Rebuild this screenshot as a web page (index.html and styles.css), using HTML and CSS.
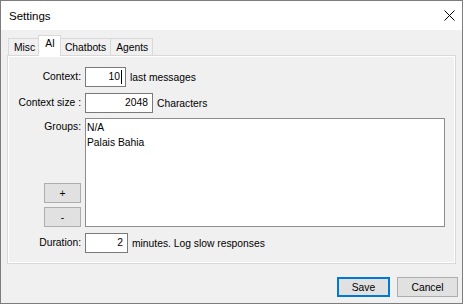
FILE: index.html
```html
<!DOCTYPE html>
<html lang="en">
  <head>
    <meta charset="UTF-8" />
    <meta name="viewport" content="width=device-width, initial-scale=1.0" />
    <title>Settings</title>
    <link rel="stylesheet" href="styles.css">
  </head>
  <body>
    <div class="window">
      <div class="titlebar">
        <span class="title">Settings</span>
        <svg class="close" width="11" height="11" viewBox="0 0 11 11">
          <path d="M0.5 0.5 L10.5 10.5 M10.5 0.5 L0.5 10.5" stroke="#000" stroke-width="1" fill="none" />
        </svg>
      </div>

      <div class="content">
        <div class="tabs">
          <div class="tab">Misc</div>
          <div class="tab active">AI</div>
          <div class="tab">Chatbots</div>
          <div class="tab">Agents</div>
        </div>

        <div class="panel">
          <div class="form">
            <div class="label">Context:</div>
            <div class="row">
              <div class="field w-context">10<span class="caret"></span></div>
              <span>last messages</span>
            </div>

            <div class="label">Context size :</div>
            <div class="row">
              <div class="field w-size">2048</div>
              <span>Characters</span>
            </div>

            <div class="label groups">
              <span class="groups-text">Groups:</span>
              <div class="list-buttons">
                <button class="btn small">+</button>
                <button class="btn small">-</button>
              </div>
            </div>
            <div class="listbox">
              <div class="item">N/A</div>
              <div class="item">Palais Bahia</div>
            </div>

            <div class="label">Duration:</div>
            <div class="row">
              <div class="field w-duration">2</div>
              <span>minutes. Log slow responses</span>
            </div>
          </div>
        </div>

        <div class="footer">
          <button class="btn save">Save</button>
          <button class="btn cancel">Cancel</button>
        </div>
      </div>
    </div>
  </body>
</html>
```

FILE: styles.css
```css
* {
  padding: 0;
  margin: 0;
  box-sizing: border-box;
}
body {
  background: #fff;
  font-family: "Liberation Sans", Arial, sans-serif;
  font-size: 10.3px;
  color: #000;
}
.window {
  width: 463px;
  height: 304px;
  border: 1px solid #7d7d7d;
  display: flex;
  flex-direction: column;
  background: #f0f0f0;
}
.titlebar {
  height: 29px;
  background: #fff;
  display: flex;
  align-items: center;
  justify-content: space-between;
  padding: 0 7px 0 8px;
}
.title {
  font-size: 11.5px;
}
.close {
  display: block;
  margin-top: -1px;
}
.content {
  flex: 1;
  padding: 5px 6px 0 6px;
}

/* tabs */
.tabs {
  display: flex;
  align-items: flex-end;
  height: 20px;
  padding-left: 2px;
}
.tab {
  height: 17px;
  line-height: 17px;
  padding: 0 4px 0 5px;
  border: 1px solid #d9d9d9;
  border-bottom: none;
  margin-left: -1px;
  background: #f0f0f0;
}
.tab.active {
  height: 21px;
  line-height: 16px;
  padding: 0 5px 0 6px;
  margin-left: -2px;
  margin-right: -1px;
  margin-bottom: -1px;
  background: #fff;
  position: relative;
  z-index: 1;
}
.panel {
  height: 209px;
  border: 1px solid #d9d9d9;
  box-shadow: inset 0 0 0 1px #fff;
  padding-top: 11px;
}

/* form grid */
.form {
  display: grid;
  grid-template-columns: 73px 1fr;
  column-gap: 4px;
  row-gap: 6px;
  padding-right: 10px;
}
.label {
  text-align: right;
  height: 20px;
  line-height: 20px;
}
.row {
  display: flex;
  align-items: center;
  gap: 4px;
}
.field {
  height: 20px;
  border: 1px solid #7a7a7a;
  background: #fff;
  line-height: 18px;
  padding-right: 4px;
  display: flex;
  justify-content: flex-end;
  align-items: center;
}
.w-context {
  width: 41px;
  padding-right: 3px;
}
.w-size {
  width: 68px;
}
.w-duration {
  width: 43px;
}
.caret {
  display: block;
  width: 1px;
  height: 14px;
  margin-left: 1px;
  background: #000;
}
.groups {
  height: 109px;
  line-height: 15px;
  padding-top: 1px;
  display: flex;
  flex-direction: column;
  align-items: flex-end;
  justify-content: space-between;
  margin-top: -1px;
}
.list-buttons {
  display: flex;
  flex-direction: column;
  gap: 4px;
}
.listbox {
  height: 109px;
  margin-top: -1px;
  border: 1px solid #8c8c8c;
  background: #fff;
  padding-top: 1px;
}
.item {
  line-height: 15px;
  padding-left: 1px;
}

/* buttons */
.btn {
  font-family: inherit;
  font-size: 10.3px;
  color: #000;
  background: #e1e1e1;
  border: 1px solid #adadad;
  height: 20px;
}
.btn.small {
  width: 37px;
}
.footer {
  display: flex;
  justify-content: flex-end;
  gap: 7px;
  margin-top: 13px;
  margin-right: -2px;
}
.save {
  width: 53px;
  border: 2px solid #0078d7;
}
.cancel {
  width: 61px;
}
```
